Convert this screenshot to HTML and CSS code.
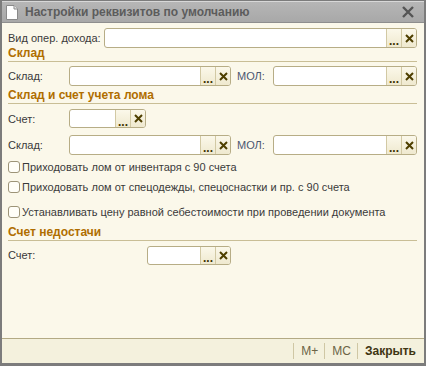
FILE: index.html
```html
<!DOCTYPE html>
<html>
<head>
  <meta charset="utf-8">
  <title>Настройки реквизитов по умолчанию</title>
  <link rel="stylesheet" href="styles.css">
</head>
<body>
  <div class="window">
    <div class="titlebar">
      <svg class="doc-icon" width="12" height="15" viewBox="0 0 12 15">
        <path d="M0.5 0.5 H8 L11.5 4 V14.5 H0.5 Z" fill="#fff" stroke="#8a8a8a"/>
        <path d="M8 0.5 V4 H11.5" fill="#e4e4e4" stroke="#8a8a8a"/>
      </svg>
      <span class="title">Настройки реквизитов по умолчанию</span>
      <svg class="close" width="12" height="12" viewBox="0 0 12 12">
        <path d="M1 1 L11 11 M11 1 L1 11" stroke="#555" stroke-width="2.4"/>
      </svg>
    </div>

    <div class="content">
      <div class="row r1">
        <span class="lbl lbl-wide">Вид опер. дохода:</span>
        <div class="field grow">
          <span class="val"></span>
          <span class="btn dots">...</span>
          <span class="btn clear"><svg width="9" height="9" viewBox="0 0 9 9"><path d="M1 1 L8 8 M8 1 L1 8" stroke="#4e3f00" stroke-width="2"/></svg></span>
        </div>
      </div>

      <div class="group g1">Склад</div>
      <div class="row r2">
        <span class="lbl">Склад:</span>
        <div class="field w-sklad">
          <span class="val"></span>
          <span class="btn dots">...</span>
          <span class="btn clear"><svg width="9" height="9" viewBox="0 0 9 9"><path d="M1 1 L8 8 M8 1 L1 8" stroke="#4e3f00" stroke-width="2"/></svg></span>
        </div>
        <span class="lbl-mol">МОЛ:</span>
        <div class="field grow">
          <span class="val"></span>
          <span class="btn dots">...</span>
          <span class="btn clear"><svg width="9" height="9" viewBox="0 0 9 9"><path d="M1 1 L8 8 M8 1 L1 8" stroke="#4e3f00" stroke-width="2"/></svg></span>
        </div>
      </div>

      <div class="group g2">Склад и счет учета лома</div>
      <div class="row r3">
        <span class="lbl">Счет:</span>
        <div class="field w-schet">
          <span class="val"></span>
          <span class="btn dots">...</span>
          <span class="btn clear"><svg width="9" height="9" viewBox="0 0 9 9"><path d="M1 1 L8 8 M8 1 L1 8" stroke="#4e3f00" stroke-width="2"/></svg></span>
        </div>
      </div>
      <div class="row r4">
        <span class="lbl">Склад:</span>
        <div class="field w-sklad">
          <span class="val"></span>
          <span class="btn dots">...</span>
          <span class="btn clear"><svg width="9" height="9" viewBox="0 0 9 9"><path d="M1 1 L8 8 M8 1 L1 8" stroke="#4e3f00" stroke-width="2"/></svg></span>
        </div>
        <span class="lbl-mol">МОЛ:</span>
        <div class="field grow">
          <span class="val"></span>
          <span class="btn dots">...</span>
          <span class="btn clear"><svg width="9" height="9" viewBox="0 0 9 9"><path d="M1 1 L8 8 M8 1 L1 8" stroke="#4e3f00" stroke-width="2"/></svg></span>
        </div>
      </div>

      <label class="check c1"><span class="box"></span>Приходовать лом от инвентаря с 90 счета</label>
      <label class="check c2"><span class="box"></span>Приходовать лом от спецодежды, спецоснастки и пр. с 90 счета</label>
      <label class="check c3"><span class="box"></span>Устанавливать цену равной себестоимости при проведении документа</label>

      <div class="group g3">Счет недостачи</div>
      <div class="row r5">
        <span class="lbl lbl-nedost">Счет:</span>
        <div class="field w-nedost">
          <span class="val"></span>
          <span class="btn dots">...</span>
          <span class="btn clear"><svg width="9" height="9" viewBox="0 0 9 9"><path d="M1 1 L8 8 M8 1 L1 8" stroke="#4e3f00" stroke-width="2"/></svg></span>
        </div>
      </div>
    </div>

    <div class="footer">
      <span class="fbtn">M+</span>
      <span class="fbtn">MC</span>
      <span class="fbtn close-btn">Закрыть</span>
    </div>
  </div>
</body>
</html>
```

FILE: styles.css
```css
* {
  box-sizing: border-box;
}

body {
  margin: 0;
  background-color: #7a7a7a;
  font-family: "Liberation Sans", Arial, sans-serif;
  font-size: 11px;
}

.window {
  width: 426px;
  height: 366px;
  border: 2px solid #7c7c7c;
  border-top: 1px solid #7c7c7c;
  border-bottom: 3px solid #7c7c7c;
  background-color: #fbf8ea;
  display: flex;
  flex-direction: column;
}

.titlebar {
  height: 22px;
  flex-shrink: 0;
  display: flex;
  align-items: center;
  padding: 0 10px 0 4px;
  background: linear-gradient(#b6b6b6, #a8a8a8);
  border-top: 1px solid #d8d8d8;
  border-bottom: 1px solid #8e8e8e;
}

.doc-icon {
  margin-right: 7px;
}

.title {
  flex: 1;
  font-weight: bold;
  font-size: 12px;
  color: #5c5c5c;
}

.content {
  flex: 1;
  padding: 5px 7px 0 6px;
}

.row {
  display: flex;
  align-items: center;
  height: 20px;
}

.lbl {
  flex-shrink: 0;
  width: 61px;
  white-space: nowrap;
  color: #3a3a3a;
}

.lbl-wide {
  width: 96px;
}

.lbl-mol {
  flex-shrink: 0;
  width: 42px;
  padding-left: 6px;
  color: #4c5670;
}

.field {
  flex-shrink: 0;
  height: 20px;
  display: flex;
  border: 1px solid #b7ad86;
  border-radius: 3px;
  background-color: #fff;
  overflow: hidden;
}

.val {
  flex: 1;
}

.field.grow {
  flex: 1;
}

.w-sklad {
  width: 162px;
}

.w-schet {
  width: 77px;
}

.w-nedost {
  width: 84px;
}

.lbl-nedost {
  width: 139px;
}

.btn {
  width: 15px;
  display: flex;
  align-items: center;
  justify-content: center;
  background: linear-gradient(#fbf8ea, #efe9cf);
  border-left: 1px solid #d2c9a4;
  color: #3e3200;
  font-weight: bold;
}

.dots {
  font-size: 12px;
  line-height: 1;
  padding-top: 6px;
}

.group {
  height: 15px;
  margin-bottom: 4px;
  font-weight: bold;
  font-size: 12px;
  color: #b06e00;
  border-bottom: 1px solid #c9be96;
  line-height: 13px;
}

.g1 {
  margin-top: -1px;
}

.g2 {
  margin-top: 3px;
  margin-bottom: 5px;
}

.r3 {
  margin-bottom: 7px;
  height: 19px;
}

.r3 .field {
  height: 19px;
}

.check {
  display: flex;
  align-items: center;
  height: 20px;
  white-space: nowrap;
  color: #3a3a3a;
}

.c1 {
  margin-top: 2px;
}

.c3 {
  margin-top: 5px;
}

.box {
  flex-shrink: 0;
  width: 12px;
  height: 12px;
  border: 1px solid #9d9478;
  border-radius: 3px;
  background-color: #fffef8;
  margin-right: 2px;
}

.g3 {
  margin-top: 4px;
}

.r5 .field {
  height: 19px;
}

.footer {
  height: 25px;
  flex-shrink: 0;
  border-top: 1px solid #b3aa84;
  background-color: #f4f1dd;
  display: flex;
  justify-content: flex-end;
  align-items: center;
  padding-right: 2px;
  font-size: 12px;
}

.fbtn {
  padding: 0 6px 0 7px;
  border-left: 1px solid #cfc7a4;
  line-height: 16px;
  color: #6c6446;
}

.close-btn {
  font-weight: bold;
  color: #3f3512;
}
```
